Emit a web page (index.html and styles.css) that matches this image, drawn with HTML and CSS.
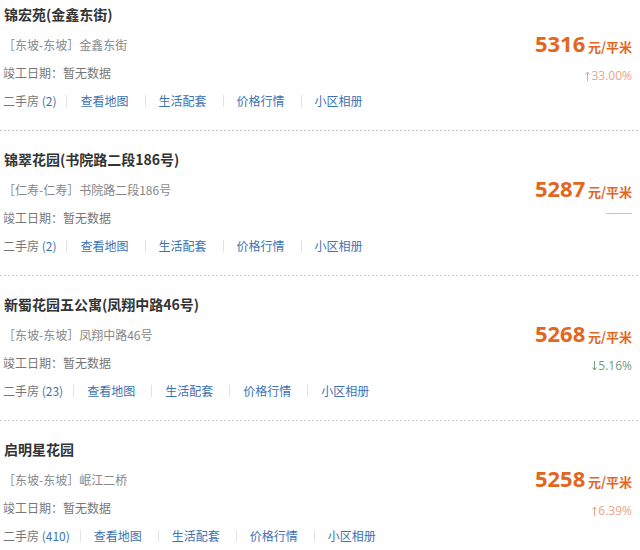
FILE: index.html
```html
<!DOCTYPE html>
<html lang="zh-CN">
<head>
<meta charset="utf-8">
<title>小区列表</title>
<link rel="stylesheet" href="styles.css">
</head>
<body>
<ul class="list">
  <li class="item">
    <h3 class="title">锦宏苑(金鑫东街)</h3>
    <div class="body">
      <div class="info">
        <p class="addr">［东坡-东坡］金鑫东街</p>
        <p class="date">竣工日期：暂无数据</p>
        <p class="links"><span class="esf">二手房 <a href="#">(2)</a></span><a class="lk" href="#">查看地图</a><a class="lk" href="#">生活配套</a><a class="lk" href="#">价格行情</a><a class="lk" href="#">小区相册</a></p>
      </div>
      <div class="price">
        <p class="num"><b>5316</b> <span class="unit">元/平米</span></p>
        <p class="chg up"><svg class="arr" width="5" height="10" viewBox="0 0 5 10"><path d="M2.5 1 V10 M0.5 3.5 L2.5 1 L4.5 3.5" fill="none" stroke="currentColor" stroke-width="1"/></svg>33.00%</p>
      </div>
    </div>
  </li>
  <li class="item">
    <h3 class="title">锦翠花园(书院路二段186号)</h3>
    <div class="body">
      <div class="info">
        <p class="addr">［仁寿-仁寿］书院路二段186号</p>
        <p class="date">竣工日期：暂无数据</p>
        <p class="links"><span class="esf">二手房 <a href="#">(2)</a></span><a class="lk" href="#">查看地图</a><a class="lk" href="#">生活配套</a><a class="lk" href="#">价格行情</a><a class="lk" href="#">小区相册</a></p>
      </div>
      <div class="price">
        <p class="num"><b>5287</b> <span class="unit">元/平米</span></p>
        <p class="chg flat"><span class="dash"></span></p>
      </div>
    </div>
  </li>
  <li class="item">
    <h3 class="title">新蜀花园五公寓(凤翔中路46号)</h3>
    <div class="body">
      <div class="info">
        <p class="addr">［东坡-东坡］凤翔中路46号</p>
        <p class="date">竣工日期：暂无数据</p>
        <p class="links"><span class="esf">二手房 <a href="#">(23)</a></span><a class="lk" href="#">查看地图</a><a class="lk" href="#">生活配套</a><a class="lk" href="#">价格行情</a><a class="lk" href="#">小区相册</a></p>
      </div>
      <div class="price">
        <p class="num"><b>5268</b> <span class="unit">元/平米</span></p>
        <p class="chg down"><svg class="arr" width="5" height="10" viewBox="0 0 5 10"><path d="M2.5 0 V9 M0.5 6.5 L2.5 9 L4.5 6.5" fill="none" stroke="currentColor" stroke-width="1"/></svg>5.16%</p>
      </div>
    </div>
  </li>
  <li class="item">
    <h3 class="title">启明星花园</h3>
    <div class="body">
      <div class="info">
        <p class="addr">［东坡-东坡］岷江二桥</p>
        <p class="date">竣工日期：暂无数据</p>
        <p class="links"><span class="esf">二手房 <a href="#">(410)</a></span><a class="lk" href="#">查看地图</a><a class="lk" href="#">生活配套</a><a class="lk" href="#">价格行情</a><a class="lk" href="#">小区相册</a></p>
      </div>
      <div class="price">
        <p class="num"><b>5258</b> <span class="unit">元/平米</span></p>
        <p class="chg up"><svg class="arr" width="5" height="10" viewBox="0 0 5 10"><path d="M2.5 1 V10 M0.5 3.5 L2.5 1 L4.5 3.5" fill="none" stroke="currentColor" stroke-width="1"/></svg>6.39%</p>
      </div>
    </div>
  </li>
</ul>
</body>
</html>
```
FILE: styles.css
```css
* { box-sizing: border-box; }
html, body { margin: 0; padding: 0; background: #fff; }
body {
  font-family: "Noto Sans CJK SC", "Noto Sans", sans-serif;
  font-size: 12px;
  color: #666;
}
p, h3, ul { margin: 0; padding: 0; }
.list { list-style: none; }
.item {
  padding: 14px 8px 15px 3px;
  background-image: repeating-linear-gradient(to right, #c8c8c8 0 2px, transparent 2px 4px);
  background-size: 100% 1px;
  background-position: left bottom;
  background-repeat: no-repeat;
  padding-bottom: 16px;
}
.item:first-child { padding-top: 0; }
.title {
  font-size: 14px;
  font-weight: bold;
  line-height: 28px;
  color: #333;
  padding-left: 1px;
}
.body {
  display: flex;
  justify-content: space-between;
  align-items: flex-start;
}
.addr {
  margin-top: 3px;
  line-height: 28px;
  color: #888;
}
.date {
  line-height: 28px;
  color: #777;
}
.links {
  line-height: 28px;
  color: #777;
  display: flex;
  align-items: center;
}
.links a { color: #3d72b4; text-decoration: none; }
.esf { padding-right: 10px; }
.lk {
  display: inline-flex;
  align-items: center;
  padding: 0 16px 0 0;
}
.lk::before {
  content: "";
  display: inline-block;
  width: 1px;
  height: 12px;
  background: #e2e2e2;
  margin-right: 13px;
}
.price {
  text-align: right;
}
.num {
  line-height: 30px;
  color: #e2661d;
  white-space: nowrap;
}
.num b {
  font-family: "Open Sans", "Noto Sans", sans-serif;
  font-size: 22px;
  font-weight: bold;
}
.unit {
  font-size: 13px;
  font-weight: bold;
}
.chg {
  line-height: 28px;
  font-family: "Open Sans", "Noto Sans", sans-serif;
  font-size: 12px;
  display: flex;
  justify-content: flex-end;
  align-items: center;
}
.arr { margin-right: 1px; }
.up { color: #e8a488; }
.down { color: #6f9d80; }
.dash {
  display: inline-block;
  width: 26px;
  height: 1px;
  background: #c4c4c4;
  margin-top: 6px;
}
```
